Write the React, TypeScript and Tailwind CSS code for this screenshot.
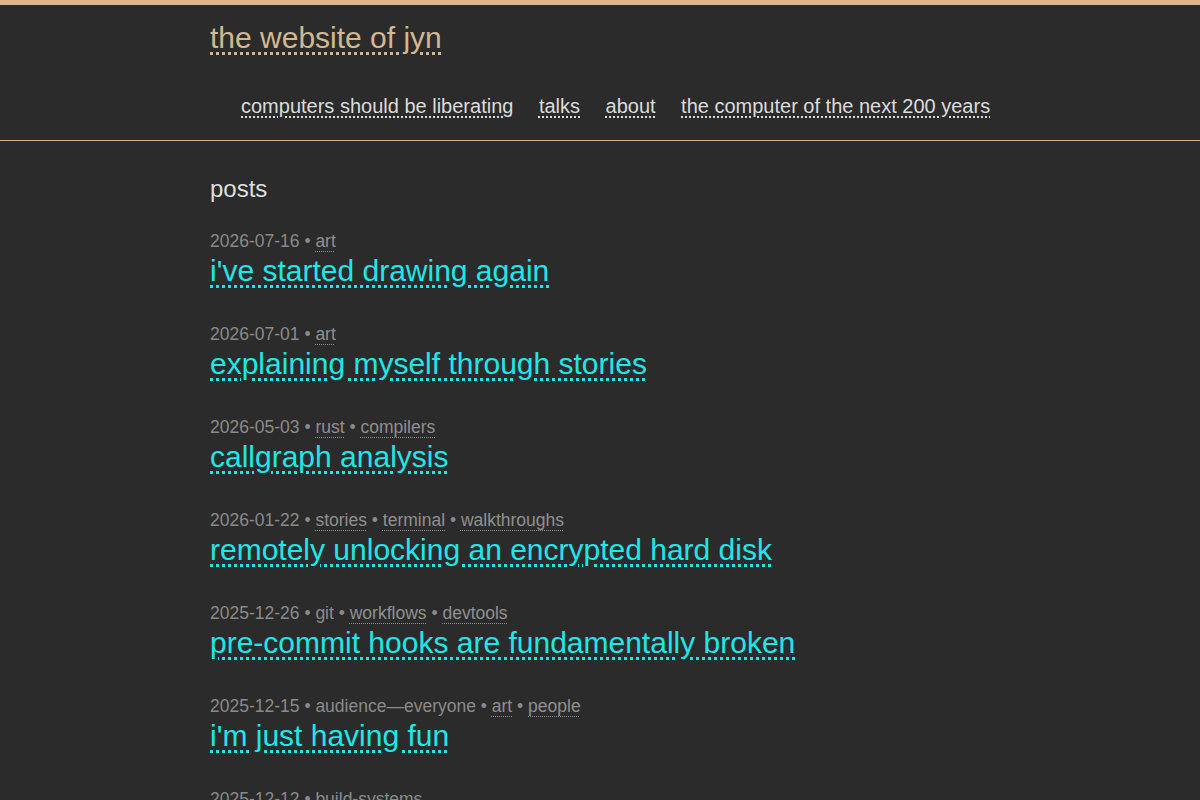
type Tag = { label: string; link: boolean };
type Post = { date: string; tags: Tag[]; title: string };

const t = (label: string, link = true): Tag => ({ label, link });

const posts: Post[] = [
  { date: "2026-07-16", tags: [t("art")], title: "i've started drawing again" },
  { date: "2026-07-01", tags: [t("art")], title: "explaining myself through stories" },
  { date: "2026-05-03", tags: [t("rust"), t("compilers")], title: "callgraph analysis" },
  {
    date: "2026-01-22",
    tags: [t("stories"), t("terminal"), t("walkthroughs")],
    title: "remotely unlocking an encrypted hard disk",
  },
  {
    date: "2025-12-26",
    tags: [t("git", false), t("workflows"), t("devtools")],
    title: "pre-commit hooks are fundamentally broken",
  },
  {
    date: "2025-12-15",
    tags: [t("audience\u2014everyone", false), t("art"), t("people")],
    title: "i'm just having fun",
  },
  { date: "2025-12-12", tags: [t("build-systems", false)], title: "build systems" },
];

const nav = [
  "computers should be liberating",
  "talks",
  "about",
  "the computer of the next 200 years",
];

export default function App() {
  return (
    <div
      className="h-screen bg-[#2b2b2b] border-t-[5px] border-[#dbb692] overflow-hidden"
      style={{ fontFamily: '"Liberation Sans", Arial, sans-serif' }}
    >
      <header className="border-b border-[#d2b48c] pb-[22px]">
        <div className="w-[780px] mx-auto pt-[15px]">
          <a
            href="#"
            className="block w-fit text-[30px] leading-[36px] text-[#d2b890] underline decoration-dotted underline-offset-[4px]"
          >
            the website of jyn
          </a>
          <nav className="mt-[38px] pl-[31px] flex gap-[25.5px] text-[20px] leading-[24px] text-[#dcdcdc] whitespace-nowrap">
            {nav.map((n) => (
              <a key={n} href="#" className="shrink-0 underline decoration-dotted underline-offset-[3px]">
                {n}
              </a>
            ))}
          </nav>
        </div>
      </header>

      <main className="w-[780px] mx-auto pt-[34px]">
        <h2 className="text-[24px] leading-[28px] text-[#dedede]">posts</h2>
        <ul className="mt-[26px] flex flex-col gap-[33px]">
          {posts.map((p) => (
            <li key={p.date + p.title}>
              <div className="text-[17.5px] leading-[24px] text-[#8a8a8a]">
                {p.date}
                {p.tags.map((tg) => (
                  <span key={tg.label}>
                    {" \u2022 "}
                    {tg.link ? (
                      <a
                        href="#"
                        className="text-[#909090] underline decoration-dotted decoration-1 underline-offset-[4px]"
                      >
                        {tg.label}
                      </a>
                    ) : (
                      tg.label
                    )}
                  </span>
                ))}
              </div>
              <a
                href="#"
                className="block w-fit text-[30px] leading-[36px] text-[#1fe6e8] underline decoration-dotted underline-offset-[4px]"
              >
                {p.title}
              </a>
            </li>
          ))}
        </ul>
      </main>
    </div>
  );
}
